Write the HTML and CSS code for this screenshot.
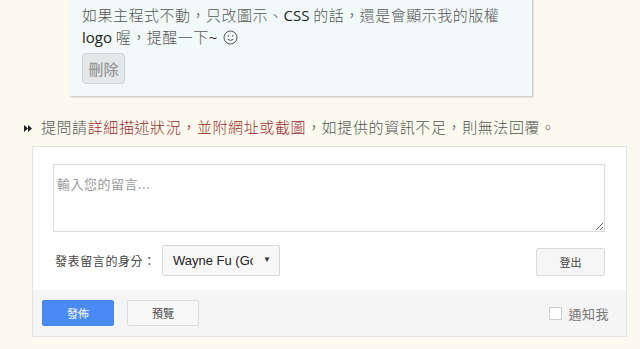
FILE: index.html
```html
<!DOCTYPE html>
<html lang="zh-Hant">
<head>
    <meta charset="UTF-8">
    <meta name="viewport" content="width=device-width, initial-scale=1.0">
    <title>留言</title>
    <link rel="stylesheet" href="styles.css">
</head>
<body>
    <div class="page">
        <div class="reply-card">
            <p class="reply-text">如果主程式不動，只改圖示、<span class="latin">CSS</span> 的話，還是會顯示我的版權<br><span class="latin">logo</span> 喔，提醒一下<span class="latin">~</span>
                <svg class="smiley" width="15" height="15" viewBox="0 0 15 15">
                    <circle cx="7.5" cy="7.5" r="6.5" fill="none" stroke="#555" stroke-width="1"/>
                    <circle cx="5.3" cy="6" r="0.8" fill="#555"/>
                    <circle cx="9.7" cy="6" r="0.8" fill="#555"/>
                    <path d="M4.6 9.2 Q7.5 11.6 10.4 9.2" fill="none" stroke="#555" stroke-width="1"/>
                </svg>
            </p>
            <button class="delete-btn">刪除</button>
        </div>

        <p class="hint">
            <svg class="hint-icon" width="8" height="7" viewBox="0 0 8 7">
                <path d="M0 0 L4 3.5 L0 7 Z M4 0 L8 3.5 L4 7 Z" fill="#222"/>
            </svg>
            提問請<span class="hint-strong">詳細描述狀況，並附網址或截圖</span>，如提供的資訊不足，則無法回覆。
        </p>

        <div class="comment-box">
            <div class="comment-body">
                <textarea class="comment-input" placeholder="輸入您的留言..."></textarea>
                <div class="identity-row">
                    <span class="identity-label">發表留言的身分：</span>
                    <div class="select-wrap">
                        <select class="identity-select">
                            <option>Wayne Fu (Google)</option>
                            <option>匿名</option>
                        </select>
                        <span class="select-arrow">▼</span>
                    </div>
                    <button class="logout-btn">登出</button>
                </div>
            </div>
            <div class="comment-footer">
                <button class="publish-btn">發佈</button>
                <button class="preview-btn">預覽</button>
                <label class="notify">
                    <span class="notify-box"></span>
                    通知我
                </label>
            </div>
        </div>
    </div>
</body>
</html>
```

FILE: styles.css
```css
:root {
    --page-bg: #fbfaee;
    --card-bg: #f2f9f9;
    --text-grey: #555;
    --hint-red: #9b2c2f;
    --blue: #4a8af4;
    --border-light: #e3e3e3;
    --cjk: "Noto Sans CJK TC", "Noto Sans CJK SC", sans-serif;
}

* {
    margin: 0;
    padding: 0;
    box-sizing: border-box;
}

body {
    background-color: var(--page-bg);
    font-family: "Liberation Sans", var(--cjk);
    color: #333;
    overflow: hidden;
}

.page {
    width: 640px;
    height: 349px;
}

.reply-card {
    margin: -6px 0 0 70px;
    width: 462px;
    padding: 10px 12px 12px;
    background-color: var(--card-bg);
    box-shadow: 1px 1px 2px rgba(0, 0, 0, 0.25);
}

.reply-text {
    font-family: var(--cjk);
    font-size: 15px;
    font-weight: 300;
    line-height: 21px;
    color: var(--text-grey);
    letter-spacing: 0.5px;
}

.latin {
    font-family: "Open Sans", sans-serif;
    font-weight: 400;
    color: #222;
    letter-spacing: 0;
}

.smiley {
    vertical-align: -2px;
    margin-left: 2px;
}

.delete-btn {
    margin-top: 5px;
    width: 43px;
    height: 31px;
    border: 1px solid #cfd3d3;
    border-radius: 4px;
    background-color: #e4e8e8;
    color: #999;
    font-family: var(--cjk);
    font-size: 15px;
    font-weight: 500;
}

.hint {
    margin: 20px 0 0 24px;
    font-family: var(--cjk);
    font-size: 15px;
    font-weight: 300;
    line-height: 22px;
    color: var(--text-grey);
    letter-spacing: 0.6px;
    white-space: nowrap;
}

.hint-icon {
    vertical-align: 1px;
    margin-right: 5px;
}

.hint-strong {
    color: var(--hint-red);
}

.comment-box {
    margin: 8px 0 0 32px;
    width: 595px;
    border: 1px solid var(--border-light);
    background-color: #fff;
}

.comment-body {
    padding: 17px 21px 14px 20px;
}

.comment-input {
    display: block;
    width: 100%;
    height: 68px;
    padding: 9px 3px;
    border: 1px solid #dcdcdc;
    font-family: var(--cjk);
    font-size: 13px;
    color: #333;
    resize: vertical;
}

.comment-input::placeholder {
    color: #999;
    letter-spacing: 0.5px;
}

.identity-row {
    display: flex;
    align-items: center;
    margin-top: 13px;
}

.identity-label {
    width: 109px;
    padding-left: 2px;
    font-family: var(--cjk);
    font-size: 12px;
    color: #444;
    letter-spacing: 0.6px;
}

.select-wrap {
    position: relative;
}

.identity-select {
    display: block;
    width: 118px;
    height: 31px;
    padding: 0 26px 0 10px;
    border: 1px solid #d8d8d8;
    border-radius: 2px;
    background-color: #f8f8f8;
    font-family: "Liberation Sans", sans-serif;
    font-size: 13px;
    color: #222;
    appearance: none;
    -webkit-appearance: none;
}

.select-arrow {
    position: absolute;
    right: 9px;
    top: 10px;
    font-size: 8px;
    color: #333;
    pointer-events: none;
}

.logout-btn {
    margin: 3px 0 0 auto;
    width: 69px;
    height: 28px;
    border: 1px solid #dcdcdc;
    border-radius: 2px;
    background-color: #f6f6f6;
    font-family: var(--cjk);
    font-size: 11px;
    color: #444;
}

.comment-footer {
    display: flex;
    align-items: center;
    gap: 13px;
    padding: 10px 17px 10px 9px;
    background-color: #f5f5f5;
}

.publish-btn,
.preview-btn {
    width: 72px;
    height: 26px;
    border-radius: 2px;
    font-family: var(--cjk);
    font-size: 11px;
}

.publish-btn {
    border: 1px solid #4583ec;
    background-color: var(--blue);
    color: #fff;
}

.preview-btn {
    border: 1px solid #dcdcdc;
    background-color: #f8f8f8;
    color: #444;
}

.notify {
    display: flex;
    align-items: center;
    gap: 6px;
    margin-left: auto;
    font-family: var(--cjk);
    font-size: 13px;
    color: #777;
    letter-spacing: 0.5px;
}

.notify-box {
    width: 13px;
    height: 13px;
    border: 1px solid #cfcfcf;
    background-color: #fff;
}
```
